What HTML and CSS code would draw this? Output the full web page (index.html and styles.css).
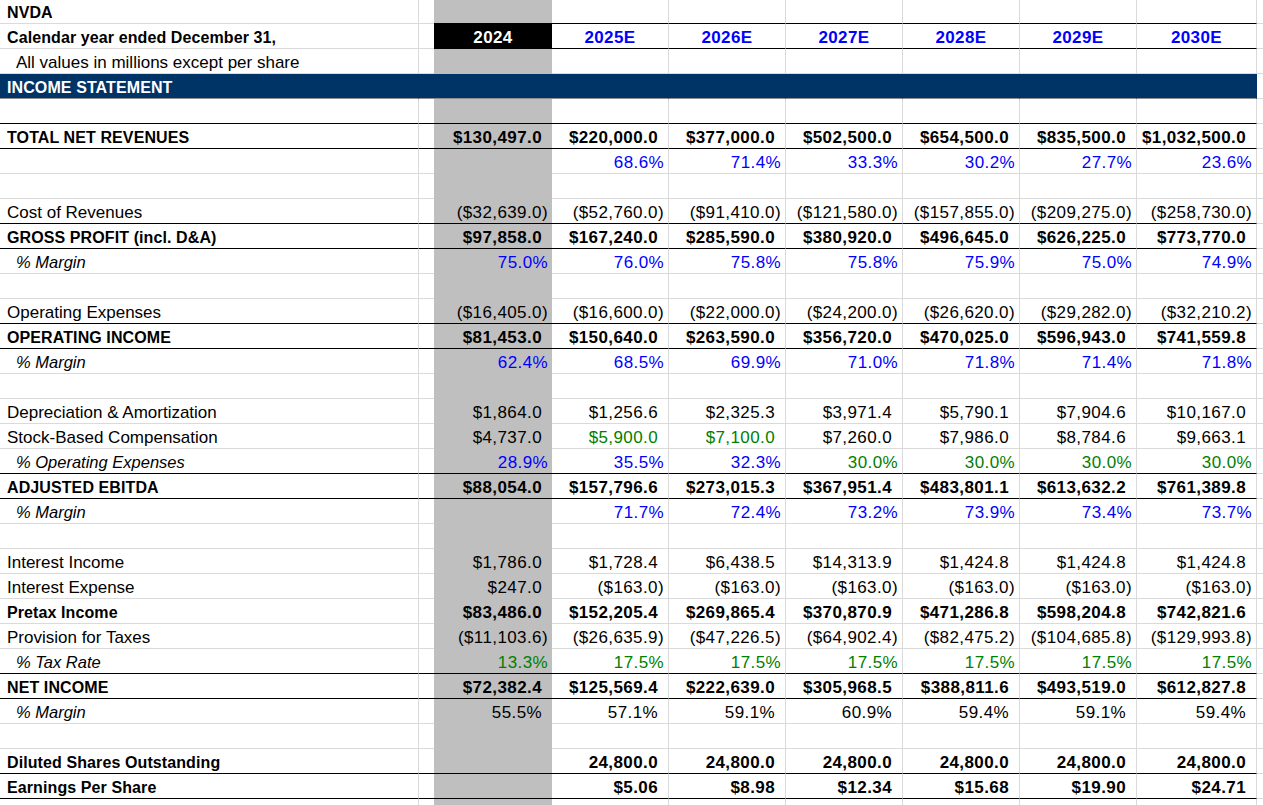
FILE: index.html
```html
<!DOCTYPE html>
<html lang="en">
<head>
<meta charset="utf-8">
<title>NVDA Income Statement</title>
<link rel="stylesheet" href="styles.css">
</head>
<body>
<div class="sheet">
  <div class="r r1"><div class="a bd">NVDA</div><div class="b"></div><div class="c"></div><div class="n"></div><div class="n"></div><div class="n"></div><div class="n"></div><div class="n"></div><div class="n"></div><div class="j"></div></div>
  <div class="r hdr"><div class="a bd">Calendar year ended December 31,</div><div class="b"></div><div class="c">2024</div><div class="n">2025E</div><div class="n">2026E</div><div class="n">2027E</div><div class="n">2028E</div><div class="n">2029E</div><div class="n">2030E</div><div class="j"></div></div>
  <div class="r"><div class="a sub">All values in millions except per share</div><div class="b"></div><div class="c"></div><div class="n"></div><div class="n"></div><div class="n"></div><div class="n"></div><div class="n"></div><div class="n"></div><div class="j"></div></div>
  <div class="r band"><div class="a bd">INCOME STATEMENT</div><div class="b"></div><div class="c"></div><div class="n"></div><div class="n"></div><div class="n"></div><div class="n"></div><div class="n"></div><div class="n"></div><div class="j"></div></div>
  <div class="r ln"><div class="a"></div><div class="b"></div><div class="c"></div><div class="n"></div><div class="n"></div><div class="n"></div><div class="n"></div><div class="n"></div><div class="n"></div><div class="j"></div></div>
  <div class="r ln tot"><div class="a bd">TOTAL NET REVENUES</div><div class="b"></div><div class="c p">$130,497.0</div><div class="n p">$220,000.0</div><div class="n p">$377,000.0</div><div class="n p">$502,500.0</div><div class="n p">$654,500.0</div><div class="n p">$835,500.0</div><div class="n p">$1,032,500.0</div><div class="j"></div></div>
  <div class="r"><div class="a"></div><div class="b"></div><div class="c"></div><div class="n bl">68.6%</div><div class="n bl">71.4%</div><div class="n bl">33.3%</div><div class="n bl">30.2%</div><div class="n bl">27.7%</div><div class="n bl">23.6%</div><div class="j"></div></div>
  <div class="r"><div class="a"></div><div class="b"></div><div class="c"></div><div class="n"></div><div class="n"></div><div class="n"></div><div class="n"></div><div class="n"></div><div class="n"></div><div class="j"></div></div>
  <div class="r ln"><div class="a">Cost of Revenues</div><div class="b"></div><div class="c">($32,639.0)</div><div class="n">($52,760.0)</div><div class="n">($91,410.0)</div><div class="n">($121,580.0)</div><div class="n">($157,855.0)</div><div class="n">($209,275.0)</div><div class="n">($258,730.0)</div><div class="j"></div></div>
  <div class="r ln tot"><div class="a bd">GROSS PROFIT (incl. D&amp;A)</div><div class="b"></div><div class="c p">$97,858.0</div><div class="n p">$167,240.0</div><div class="n p">$285,590.0</div><div class="n p">$380,920.0</div><div class="n p">$496,645.0</div><div class="n p">$626,225.0</div><div class="n p">$773,770.0</div><div class="j"></div></div>
  <div class="r"><div class="a it">% Margin</div><div class="b"></div><div class="c bl">75.0%</div><div class="n bl">76.0%</div><div class="n bl">75.8%</div><div class="n bl">75.8%</div><div class="n bl">75.9%</div><div class="n bl">75.0%</div><div class="n bl">74.9%</div><div class="j"></div></div>
  <div class="r"><div class="a"></div><div class="b"></div><div class="c"></div><div class="n"></div><div class="n"></div><div class="n"></div><div class="n"></div><div class="n"></div><div class="n"></div><div class="j"></div></div>
  <div class="r ln"><div class="a">Operating Expenses</div><div class="b"></div><div class="c">($16,405.0)</div><div class="n">($16,600.0)</div><div class="n">($22,000.0)</div><div class="n">($24,200.0)</div><div class="n">($26,620.0)</div><div class="n">($29,282.0)</div><div class="n">($32,210.2)</div><div class="j"></div></div>
  <div class="r ln tot"><div class="a bd">OPERATING INCOME</div><div class="b"></div><div class="c p">$81,453.0</div><div class="n p">$150,640.0</div><div class="n p">$263,590.0</div><div class="n p">$356,720.0</div><div class="n p">$470,025.0</div><div class="n p">$596,943.0</div><div class="n p">$741,559.8</div><div class="j"></div></div>
  <div class="r"><div class="a it">% Margin</div><div class="b"></div><div class="c bl">62.4%</div><div class="n bl">68.5%</div><div class="n bl">69.9%</div><div class="n bl">71.0%</div><div class="n bl">71.8%</div><div class="n bl">71.4%</div><div class="n bl">71.8%</div><div class="j"></div></div>
  <div class="r"><div class="a"></div><div class="b"></div><div class="c"></div><div class="n"></div><div class="n"></div><div class="n"></div><div class="n"></div><div class="n"></div><div class="n"></div><div class="j"></div></div>
  <div class="r"><div class="a">Depreciation &amp; Amortization</div><div class="b"></div><div class="c p">$1,864.0</div><div class="n p">$1,256.6</div><div class="n p">$2,325.3</div><div class="n p">$3,971.4</div><div class="n p">$5,790.1</div><div class="n p">$7,904.6</div><div class="n p">$10,167.0</div><div class="j"></div></div>
  <div class="r"><div class="a">Stock-Based Compensation</div><div class="b"></div><div class="c p">$4,737.0</div><div class="n p gr">$5,900.0</div><div class="n p gr">$7,100.0</div><div class="n p">$7,260.0</div><div class="n p">$7,986.0</div><div class="n p">$8,784.6</div><div class="n p">$9,663.1</div><div class="j"></div></div>
  <div class="r ln"><div class="a it">% Operating Expenses</div><div class="b"></div><div class="c bl">28.9%</div><div class="n bl">35.5%</div><div class="n bl">32.3%</div><div class="n gr">30.0%</div><div class="n gr">30.0%</div><div class="n gr">30.0%</div><div class="n gr">30.0%</div><div class="j"></div></div>
  <div class="r ln tot"><div class="a bd">ADJUSTED EBITDA</div><div class="b"></div><div class="c p">$88,054.0</div><div class="n p">$157,796.6</div><div class="n p">$273,015.3</div><div class="n p">$367,951.4</div><div class="n p">$483,801.1</div><div class="n p">$613,632.2</div><div class="n p">$761,389.8</div><div class="j"></div></div>
  <div class="r"><div class="a it">% Margin</div><div class="b"></div><div class="c"></div><div class="n bl">71.7%</div><div class="n bl">72.4%</div><div class="n bl">73.2%</div><div class="n bl">73.9%</div><div class="n bl">73.4%</div><div class="n bl">73.7%</div><div class="j"></div></div>
  <div class="r"><div class="a"></div><div class="b"></div><div class="c"></div><div class="n"></div><div class="n"></div><div class="n"></div><div class="n"></div><div class="n"></div><div class="n"></div><div class="j"></div></div>
  <div class="r"><div class="a">Interest Income</div><div class="b"></div><div class="c p">$1,786.0</div><div class="n p">$1,728.4</div><div class="n p">$6,438.5</div><div class="n p">$14,313.9</div><div class="n p">$1,424.8</div><div class="n p">$1,424.8</div><div class="n p">$1,424.8</div><div class="j"></div></div>
  <div class="r"><div class="a">Interest Expense</div><div class="b"></div><div class="c p">$247.0</div><div class="n">($163.0)</div><div class="n">($163.0)</div><div class="n">($163.0)</div><div class="n">($163.0)</div><div class="n">($163.0)</div><div class="n">($163.0)</div><div class="j"></div></div>
  <div class="r tot"><div class="a bd">Pretax Income</div><div class="b"></div><div class="c p">$83,486.0</div><div class="n p">$152,205.4</div><div class="n p">$269,865.4</div><div class="n p">$370,870.9</div><div class="n p">$471,286.8</div><div class="n p">$598,204.8</div><div class="n p">$742,821.6</div><div class="j"></div></div>
  <div class="r"><div class="a">Provision for Taxes</div><div class="b"></div><div class="c">($11,103.6)</div><div class="n">($26,635.9)</div><div class="n">($47,226.5)</div><div class="n">($64,902.4)</div><div class="n">($82,475.2)</div><div class="n">($104,685.8)</div><div class="n">($129,993.8)</div><div class="j"></div></div>
  <div class="r ln"><div class="a it">% Tax Rate</div><div class="b"></div><div class="c gr">13.3%</div><div class="n gr">17.5%</div><div class="n gr">17.5%</div><div class="n gr">17.5%</div><div class="n gr">17.5%</div><div class="n gr">17.5%</div><div class="n gr">17.5%</div><div class="j"></div></div>
  <div class="r ln tot"><div class="a bd">NET INCOME</div><div class="b"></div><div class="c p">$72,382.4</div><div class="n p">$125,569.4</div><div class="n p">$222,639.0</div><div class="n p">$305,968.5</div><div class="n p">$388,811.6</div><div class="n p">$493,519.0</div><div class="n p">$612,827.8</div><div class="j"></div></div>
  <div class="r"><div class="a it">% Margin</div><div class="b"></div><div class="c p">55.5%</div><div class="n p">57.1%</div><div class="n p">59.1%</div><div class="n p">60.9%</div><div class="n p">59.4%</div><div class="n p">59.1%</div><div class="n p">59.4%</div><div class="j"></div></div>
  <div class="r"><div class="a"></div><div class="b"></div><div class="c"></div><div class="n"></div><div class="n"></div><div class="n"></div><div class="n"></div><div class="n"></div><div class="n"></div><div class="j"></div></div>
  <div class="r ln tot"><div class="a bd">Diluted Shares Outstanding</div><div class="b"></div><div class="c"></div><div class="n p">24,800.0</div><div class="n p">24,800.0</div><div class="n p">24,800.0</div><div class="n p">24,800.0</div><div class="n p">24,800.0</div><div class="n p">24,800.0</div><div class="j"></div></div>
  <div class="r ln tot"><div class="a bd">Earnings Per Share</div><div class="b"></div><div class="c"></div><div class="n p">$5.06</div><div class="n p">$8.98</div><div class="n p">$12.34</div><div class="n p">$15.68</div><div class="n p">$19.90</div><div class="n p">$24.71</div><div class="j"></div></div>
  <div class="r"><div class="a"></div><div class="b"></div><div class="c"></div><div class="n"></div><div class="n"></div><div class="n"></div><div class="n"></div><div class="n"></div><div class="n"></div><div class="j"></div></div>
</div>
</body>
</html>
```

FILE: styles.css
```css
* { box-sizing: border-box; }
html, body { margin: 0; padding: 0; background: #fff; }
body {
  font-family: "Liberation Sans", Arial, sans-serif;
  color: #000;
  width: 1263px;
  height: 805px;
  overflow: hidden;
}
.sheet { display: flex; flex-direction: column; }
.r {
  display: grid;
  grid-template-columns: 419px 15px 118px repeat(5, 117px) 120px 1fr;
  height: 25px;
  flex: none;
}
.r > div {
  border-right: 1px solid #dadada;
  border-bottom: 1px solid #dadada;
  line-height: 21px;
  padding: 3px 4px 0 4px;
  white-space: nowrap;
  font-size: 17px;
  letter-spacing: 0.4px;
  text-align: right;
}
.r > .a {
  text-align: left;
  padding-left: 7px;
  letter-spacing: 0;
  font-size: 17px;
}
.r > .a.bd { font-weight: 700; font-size: 16px; letter-spacing: 0.1px; }
.r > .a.sub { padding-left: 16px; }
.r > .a.it { padding-left: 16px; font-style: italic; font-size: 16.5px; }
.r > .b { border-right: 0; }
.r > .c { background: #bfbfbf; border-right: 0; border-bottom-color: #bfbfbf; }
.r > .p { padding-right: 10px; }
.r > .bl { color: #0000ff; }
.r > .gr { color: #008000; }
.tot > .n, .tot > .c { font-weight: 700; }

.r1 { height: 24px; }
.r1 > div { line-height: 20px; }
.r1 > .n, .r1 > .c { border-bottom-color: #000; }

.hdr > .n {
  text-align: center;
  color: #0000ff;
  font-weight: 700;
  border-bottom-color: #000;
  padding: 3px 0 0 0;
}
.hdr > .c {
  background: #000;
  color: #fff;
  font-weight: 700;
  text-align: center;
  border-bottom-color: #000;
  padding: 3px 0 0 0;
}

.band > div,
.band > .c {
  background: #003366;
  border-right-color: #003366;
  border-bottom-color: #8f8f8f;
}
.band > .a { color: #fff; }
.band > .j { background: #fff; border-right-color: #dadada; border-bottom-color: #dadada; }

.ln > div:not(.j),
.ln > .c { border-bottom-color: #000; }
```
